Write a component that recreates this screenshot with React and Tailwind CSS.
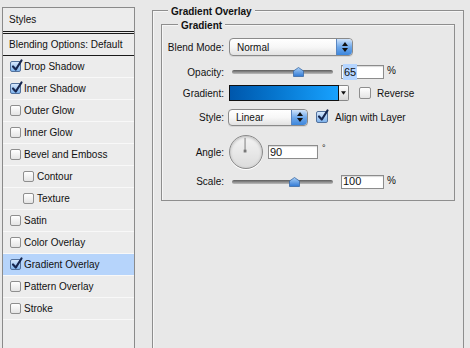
import React from 'react'

const styles = [
  { label: 'Drop Shadow', checked: true },
  { label: 'Inner Shadow', checked: true },
  { label: 'Outer Glow' },
  { label: 'Inner Glow' },
  { label: 'Bevel and Emboss' },
  { label: 'Contour', sub: true },
  { label: 'Texture', sub: true },
  { label: 'Satin' },
  { label: 'Color Overlay' },
  { label: 'Gradient Overlay', checked: true, active: true },
  { label: 'Pattern Overlay' },
  { label: 'Stroke' },
]

function Check({ checked, size = 'w-[11px] h-[11px]' }) {
  if (!checked) {
    return (
      <span className={`${size} shrink-0 rounded-[2px] border border-[#8e8e8e] bg-gradient-to-b from-white to-[#e4e4e4]`} />
    )
  }
  return (
    <span className={`${size} shrink-0 relative rounded-[2px] border border-[#52719c] bg-gradient-to-b from-[#d5e7fc] to-[#7fb3ec]`}>
      <svg viewBox="0 0 12 12" className="absolute left-[0px] top-[-2px] w-[12px] h-[12px] overflow-visible">
        <path d="M2 6.5 L4.8 9.5 L10.5 0.5" fill="none" stroke="#16264f" strokeWidth="2.2" strokeLinecap="round" strokeLinejoin="round" />
      </svg>
    </span>
  )
}

function Stepper() {
  return (
    <span className="w-[16px] h-full shrink-0 rounded-r-[4px] border-l border-[#5a86c0] bg-gradient-to-b from-[#cfe3fa] via-[#6ea8ea] to-[#3c86dc] flex flex-col items-center justify-center gap-[2px]">
      <svg viewBox="0 0 6 4" className="w-[6px] h-[4px]"><path d="M3 0 L6 4 L0 4 Z" fill="#111" /></svg>
      <svg viewBox="0 0 6 4" className="w-[6px] h-[4px]"><path d="M0 0 L6 0 L3 4 Z" fill="#111" /></svg>
    </span>
  )
}

function Select({ value, width, height }) {
  return (
    <div className={`${width} ${height} flex items-stretch rounded-[4px] border border-[#8a8a8a] bg-gradient-to-b from-white via-[#f7f7f7] to-[#e2e2e2] shadow-[0_1px_0_rgba(0,0,0,0.08)]`}>
      <span className="flex-1 flex items-center pl-[7px] text-[10px]">{value}</span>
      <Stepper />
    </div>
  )
}

function Slider({ pos }) {
  return (
    <div className="relative w-[101px] h-[10px] flex items-center">
      <div className="w-full h-[4px] rounded-full bg-gradient-to-b from-[#5c5c5c] to-[#bdbdbd]" />
      <svg viewBox="0 0 11 10" className="absolute top-[0px] w-[11px] h-[10px]" style={{ left: pos - 5 }}>
        <defs>
          <linearGradient id={`th${pos}`} x1="0" y1="0" x2="0" y2="1">
            <stop offset="0" stopColor="#a9d0f7" />
            <stop offset="1" stopColor="#2f78d4" />
          </linearGradient>
        </defs>
        <path d="M5.5 0.5 L10.5 4 L10.5 9.5 L0.5 9.5 L0.5 4 Z" fill={`url(#th${pos})`} stroke="#3b6aa5" strokeWidth="0.8" />
      </svg>
    </div>
  )
}

function Field({ children, width }) {
  return (
    <div className={`${width} h-[14px] border border-[#8c8c8c] bg-white flex items-center pl-[1px] text-[11px] shadow-[inset_0_1px_1px_rgba(0,0,0,0.15)]`}>
      {children}
    </div>
  )
}

function Label({ children }) {
  return <span className="w-[62px] shrink-0 text-right text-[10px]">{children}</span>
}

export default function App() {
  return (
    <div className="w-[470px] h-[348px] overflow-hidden bg-[#e8e8e8] flex font-['Liberation_Sans',Arial,sans-serif] text-[10px] text-[#111]">
      {/* Styles list */}
      <div className="ml-[2px] mt-[7px] w-[133px] h-[360px] shrink-0 border border-[#8a8a8a] bg-[#ececec] flex flex-col">
        <div className="h-[23px] flex items-center pl-[6px]">Styles</div>
        <div className="h-[3px] border-y border-[#1a1a1a]" />
        <div className="h-[21px] flex items-center pl-[6px]">Blending Options: Default</div>
        <div className="h-[1px] bg-[#1a1a1a]" />
        {styles.map((s) => (
          <div
            key={s.label}
            className={`h-[22px] flex items-center gap-[3px] border-b border-[#f8f8f8] ${s.sub ? 'pl-[20px]' : 'pl-[7px]'} ${s.active ? 'bg-[#b6d4fb]' : ''}`}
          >
            <Check checked={s.checked} />
            <span>{s.label}</span>
          </div>
        ))}
      </div>

      {/* Gradient Overlay group */}
      <div className="ml-[17px] mt-[10px] w-[312px] h-[360px] shrink-0 relative border border-[#8e8e8e] shadow-[inset_1px_1px_0_#f6f6f6]">
        <span className="absolute left-[15px] top-[-7px] px-[3px] bg-[#e8e8e8] font-bold">Gradient Overlay</span>

        <div className="mt-[13px] mx-[8px] h-[177px] relative border border-[#8e8e8e] shadow-[inset_1px_1px_0_#f6f6f6]">
          <span className="absolute left-[16px] top-[-7px] px-[3px] bg-[#e8e8e8] font-bold">Gradient</span>

          <div className="flex flex-col pt-[13px]">
            {/* Blend mode */}
            <div className="h-[18px] flex items-center">
              <Label>Blend Mode:</Label>
              <div className="ml-[5px]">
                <Select value="Normal" width="w-[124px]" height="h-[18px]" />
              </div>
            </div>

            {/* Opacity */}
            <div className="mt-[8px] h-[16px] flex items-center">
              <Label>Opacity:</Label>
              <div className="ml-[8px]"><Slider pos={66} /></div>
              <div className="ml-[8px]">
                <Field width="w-[43px]">
                  <span className="bg-[#b5d5ff] px-[1px]">65</span>
                </Field>
              </div>
              <span className="ml-[3px] self-start -mt-[1px]">%</span>
            </div>

            {/* Gradient */}
            <div className="mt-[5px] h-[16px] flex items-center">
              <Label>Gradient:</Label>
              <div className="ml-[5px] flex h-[16px]">
                <div className="w-[110px] h-full border border-[#111] bg-gradient-to-r from-[#0057ac] to-[#18a2ff]" />
                <div className="w-[10px] h-full border border-l-0 border-[#888] rounded-r-[2px] bg-gradient-to-b from-white to-[#d8d8d8] flex items-center justify-center">
                  <svg viewBox="0 0 6 4" className="w-[5px] h-[4px]"><path d="M0 0 L6 0 L3 4 Z" fill="#111" /></svg>
                </div>
              </div>
              <div className="ml-[10px] flex items-center gap-[6px]">
                <Check size="w-[12px] h-[12px]" />
                <span>Reverse</span>
              </div>
            </div>

            {/* Style */}
            <div className="mt-[8px] h-[16px] flex items-center">
              <Label>Style:</Label>
              <div className="ml-[4px]">
                <Select value="Linear" width="w-[80px]" height="h-[17px]" />
              </div>
              <div className="ml-[8px] flex items-center gap-[7px]">
                <Check checked size="w-[12px] h-[12px]" />
                <span>Align with Layer</span>
              </div>
            </div>

            {/* Angle */}
            <div className="mt-[10px] h-[34px] flex items-center">
              <Label>Angle:</Label>
              <div className="ml-[5px] w-[34px] h-[34px] rounded-full border border-[#8a8a8a] bg-gradient-to-b from-[#f4f4f4] to-[#dcdcdc] shadow-[inset_0_1px_3px_rgba(0,0,0,0.25),0_1px_0_#fff] flex items-center justify-center">
                <svg viewBox="0 0 34 34" className="w-[32px] h-[32px]">
                  <line x1="16" y1="16" x2="16" y2="2" stroke="#777" strokeWidth="1" />
                  <rect x="14.5" y="14.5" width="3" height="3" fill="#777" />
                </svg>
              </div>
              <div className="ml-[5px]">
                <Field width="w-[50px]">90</Field>
              </div>
              <span className="ml-[4px] self-start mt-[7px] text-[9px]">°</span>
            </div>

            {/* Scale */}
            <div className="mt-[5px] h-[15px] flex items-center">
              <Label>Scale:</Label>
              <div className="ml-[8px]"><Slider pos={62} /></div>
              <div className="ml-[8px]">
                <Field width="w-[43px]">100</Field>
              </div>
              <span className="ml-[3px] self-start -mt-[1px]">%</span>
            </div>
          </div>
        </div>
      </div>
    </div>
  )
}
